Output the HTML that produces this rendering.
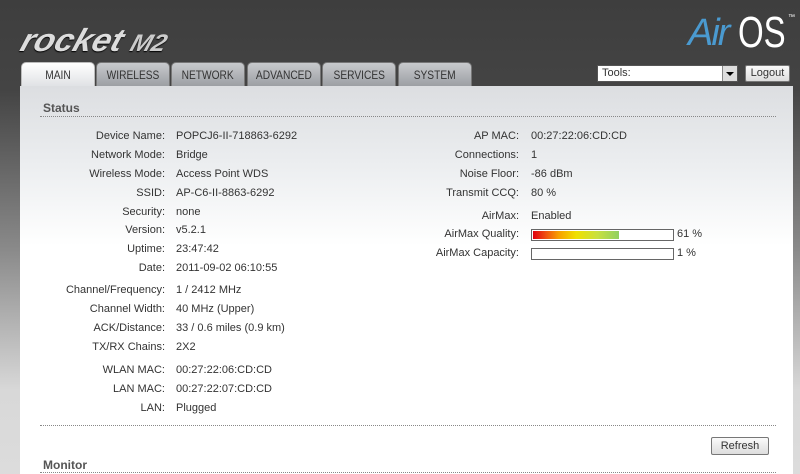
<!DOCTYPE html>
<html style="width:800px;height:474px;overflow:hidden"><head><style>
*{margin:0;padding:0;box-sizing:border-box}
body{width:800px;height:474px;overflow:hidden;position:relative;font-family:"Liberation Sans",sans-serif;font-size:11px;color:#333;background:linear-gradient(#3e3e3e 0,#444 90px,#8a8a8a 250px,#d8d8d8 390px,#dcdcdc 474px)}
.abs{position:absolute}
.logo{left:22px;top:22px;font:italic 900 32px "Liberation Sans",sans-serif;color:#ddd;letter-spacing:0px;transform:skewX(-18deg) scaleX(1.05);transform-origin:left;text-shadow:0 1px 1px #000}
.logo span{font-size:24px;font-weight:700;letter-spacing:0;color:#ccc}
.air{left:688px;top:12px;font:italic 38px "Liberation Sans",sans-serif;color:#4a9ad0;letter-spacing:-2px}
.os{left:738px;top:8px;font:44px "Liberation Sans",sans-serif;color:#fff;transform:scaleX(.75);transform-origin:left}
.tab{top:62px;height:25px;width:74px;border-radius:5px 5px 0 0;background:linear-gradient(#c8cacd,#9a9da2);border:1px solid #777;border-bottom:none;text-align:center;line-height:25px;font-size:12px;color:#333;overflow:hidden}
.tab span{display:inline-block;transform:scaleX(.85)}
.tab.on{background:linear-gradient(#fff,#dfe1e4);border-color:#bbb}
.panel{left:20px;top:86px;width:773px;height:388px;background:linear-gradient(#dcdee1 0,#eceef0 80px,#fff 160px,#fff)}
.h{font-weight:bold;font-size:12px;color:#555}
.dl{height:1px;border-top:1px dotted #888}
.l{text-align:right;width:140px;left:25px}
.l2{text-align:right;width:160px;left:359px}
.sel{left:597px;top:65px;width:141px;height:17px;background:#fff;border:1px solid #555;padding-left:4px;line-height:15px}
.arr{right:0;top:0;width:15px;height:15px;background:#ddd;border-left:1px solid #888}
.btn{background:linear-gradient(#fafafa,#ddd);border:1px solid #777;border-radius:2px;text-align:center;font-size:11px}
.bar{left:531px;width:143px;height:12px;border:1px solid #666;background:#fff}
</style></head><body>
<div class="abs logo">rocket <span>M2</span></div>
<div class="abs air">Air</div><div class="abs os">OS</div>
<div class="abs" style="left:788px;top:14px;color:#fff;font-size:7px">™</div>
<div class="abs tab on" style="left:21px"><span>MAIN</span></div>
<div class="abs tab" style="left:96px"><span>WIRELESS</span></div>
<div class="abs tab" style="left:171px"><span>NETWORK</span></div>
<div class="abs tab" style="left:247px"><span>ADVANCED</span></div>
<div class="abs tab" style="left:322px"><span>SERVICES</span></div>
<div class="abs tab" style="left:398px"><span>SYSTEM</span></div>
<div class="abs sel">Tools:<div class="abs arr"><div style="margin:6px auto 0;width:0;height:0;border-left:4px solid transparent;border-right:4px solid transparent;border-top:4px solid #000"></div></div></div>
<div class="abs btn" style="left:745px;top:65px;width:45px;height:17px;line-height:15px">Logout</div>
<div class="abs panel"></div>
<div class="abs h" style="left:43px;top:101px">Status</div>
<div class="abs dl" style="left:40px;top:116px;width:736px"></div>

<div class="abs l" style="top:130px">Device Name:</div><div class="abs" style="left:176px;top:130px">POPCJ6-II-718863-6292</div>
<div class="abs l" style="top:149px">Network Mode:</div><div class="abs" style="left:176px;top:149px">Bridge</div>
<div class="abs l" style="top:168px">Wireless Mode:</div><div class="abs" style="left:176px;top:168px">Access Point WDS</div>
<div class="abs l" style="top:187px">SSID:</div><div class="abs" style="left:176px;top:187px">AP-C6-II-8863-6292</div>
<div class="abs l" style="top:206px">Security:</div><div class="abs" style="left:176px;top:206px">none</div>
<div class="abs l" style="top:224px">Version:</div><div class="abs" style="left:176px;top:224px">v5.2.1</div>
<div class="abs l" style="top:243px">Uptime:</div><div class="abs" style="left:176px;top:243px">23:47:42</div>
<div class="abs l" style="top:262px">Date:</div><div class="abs" style="left:176px;top:262px">2011-09-02 06:10:55</div>
<div class="abs l" style="top:284px">Channel/Frequency:</div><div class="abs" style="left:176px;top:284px">1 / 2412 MHz</div>
<div class="abs l" style="top:303px">Channel Width:</div><div class="abs" style="left:176px;top:303px">40 MHz (Upper)</div>
<div class="abs l" style="top:322px">ACK/Distance:</div><div class="abs" style="left:176px;top:322px">33 / 0.6 miles (0.9 km)</div>
<div class="abs l" style="top:341px">TX/RX Chains:</div><div class="abs" style="left:176px;top:341px">2X2</div>
<div class="abs l" style="top:364px">WLAN MAC:</div><div class="abs" style="left:176px;top:364px">00:27:22:06:CD:CD</div>
<div class="abs l" style="top:383px">LAN MAC:</div><div class="abs" style="left:176px;top:383px">00:27:22:07:CD:CD</div>
<div class="abs l" style="top:402px">LAN:</div><div class="abs" style="left:176px;top:402px">Plugged</div>

<div class="abs l2" style="top:130px">AP MAC:</div><div class="abs" style="left:531px;top:130px">00:27:22:06:CD:CD</div>
<div class="abs l2" style="top:149px">Connections:</div><div class="abs" style="left:531px;top:149px">1</div>
<div class="abs l2" style="top:168px">Noise Floor:</div><div class="abs" style="left:531px;top:168px">-86 dBm</div>
<div class="abs l2" style="top:187px">Transmit CCQ:</div><div class="abs" style="left:531px;top:187px">80 %</div>
<div class="abs l2" style="top:210px">AirMax:</div><div class="abs" style="left:531px;top:210px">Enabled</div>
<div class="abs l2" style="top:228px">AirMax Quality:</div>
<div class="abs bar" style="top:229px"><div style="margin:1px;height:8px;width:86px;background:linear-gradient(90deg,#e00010,#f05010 15%,#f8a000 30%,#f0e000 50%,#c8e040 75%,#90d060)"></div></div>
<div class="abs" style="left:677px;top:228px">61 %</div>
<div class="abs l2" style="top:247px">AirMax Capacity:</div>
<div class="abs bar" style="top:248px"></div>
<div class="abs" style="left:677px;top:247px">1 %</div>

<div class="abs dl" style="left:40px;top:425px;width:736px"></div>
<div class="abs btn" style="left:711px;top:437px;width:58px;height:18px;line-height:16px">Refresh</div>
<div class="abs h" style="left:43px;top:458px">Monitor</div>
<div class="abs dl" style="left:40px;top:472px;width:736px"></div>
</body></html>
